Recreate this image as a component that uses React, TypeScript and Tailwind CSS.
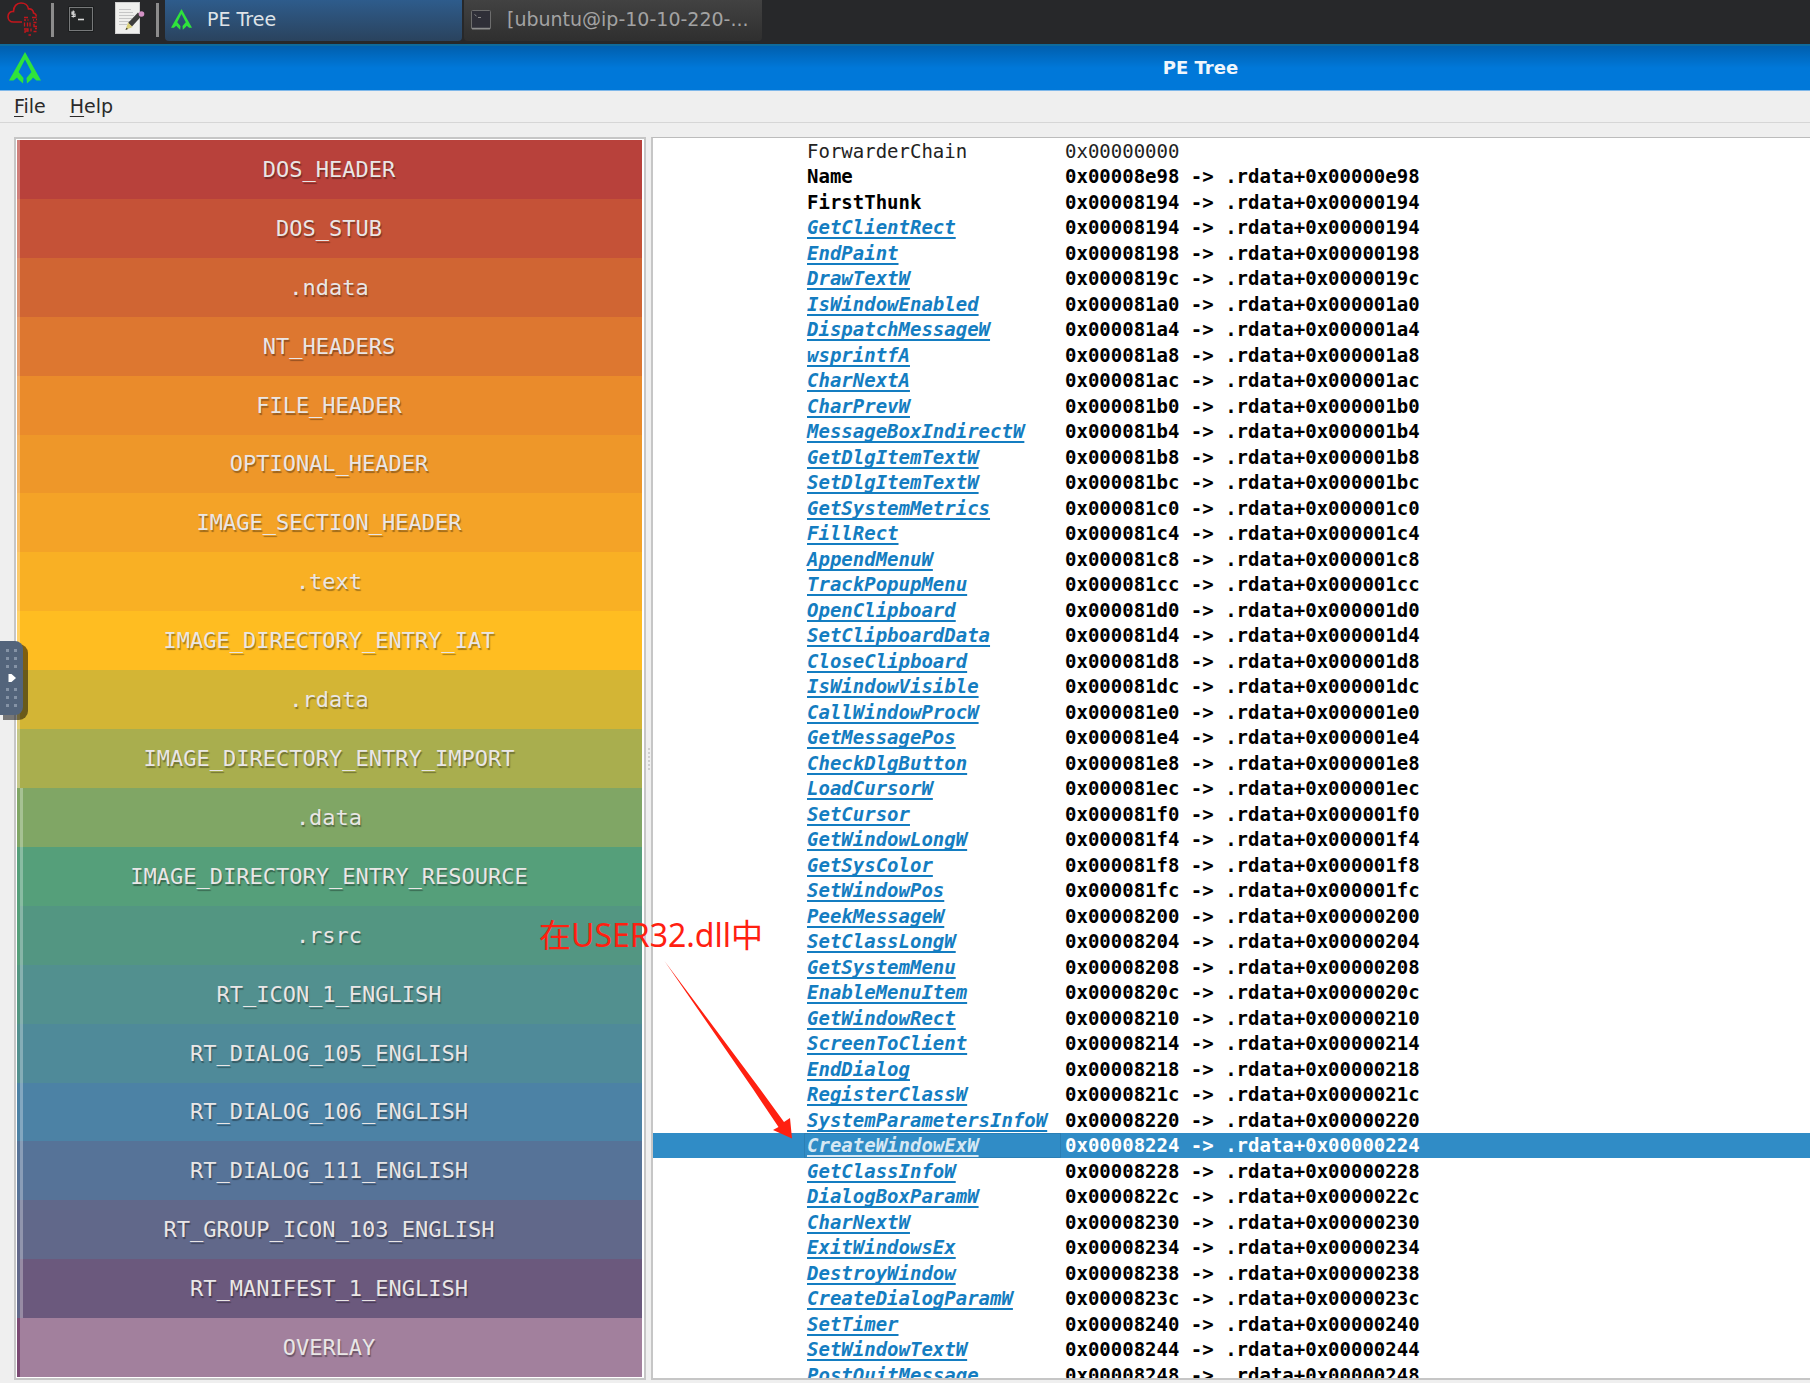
import React from "react";

const sections = [
  { label: "DOS_HEADER", color: "bg-[#b8413b]", edge: "border-[#d07f7b]" },
  { label: "DOS_STUB", color: "bg-[#c55237]", edge: "border-[#d98a77]" },
  { label: ".ndata", color: "bg-[#d06533]", edge: "border-[#df9674]" },
  { label: "NT_HEADERS", color: "bg-[#dd7730]", edge: "border-[#e8a273]" },
  { label: "FILE_HEADER", color: "bg-[#ea8b2b]", edge: "border-[#f0af70]" },
  { label: "OPTIONAL_HEADER", color: "bg-[#ee9729]", edge: "border-[#f3b76e]" },
  { label: "IMAGE_SECTION_HEADER", color: "bg-[#f4a327]", edge: "border-[#f7c06d]" },
  { label: ".text", color: "bg-[#f9b024]", edge: "border-[#fbc96b]" },
  { label: "IMAGE_DIRECTORY_ENTRY_IAT", color: "bg-[#ffbd21]", edge: "border-[#ffd269]" },
  { label: ".rdata", color: "bg-[#d3b535]", edge: "border-[#e0cc76]" },
  { label: "IMAGE_DIRECTORY_ENTRY_IMPORT", color: "bg-[#a9ae4e]", edge: "border-[#c4c787]" },
  { label: ".data", color: "bg-[#80a665]", edge: "border-[#80a665]", nested: true },
  { label: "IMAGE_DIRECTORY_ENTRY_RESOURCE", color: "bg-[#559f7a]", edge: "border-[#559f7a]", nested: true },
  { label: ".rsrc", color: "bg-[#539682]", edge: "border-[#559f7a]", nested: true },
  { label: "RT_ICON_1_ENGLISH", color: "bg-[#52908f]", edge: "border-[#539682]", nested: true },
  { label: "RT_DIALOG_105_ENGLISH", color: "bg-[#4f8a99]", edge: "border-[#52908f]", nested: true },
  { label: "RT_DIALOG_106_ENGLISH", color: "bg-[#4c82a5]", edge: "border-[#4c82a5]", nested: true },
  { label: "RT_DIALOG_111_ENGLISH", color: "bg-[#567398]", edge: "border-[#567398]", nested: true },
  { label: "RT_GROUP_ICON_103_ENGLISH", color: "bg-[#61688a]", edge: "border-[#61688a]", nested: true },
  { label: "RT_MANIFEST_1_ENGLISH", color: "bg-[#6b597d]", edge: "border-[#61688a]", nested: true },
  { label: "OVERLAY", color: "bg-[#a2809d]", edge: "border-[#7b4a73]" },
];

// imported functions in thunk order, 4 bytes apart
const imports = [
  "GetClientRect",
  "EndPaint",
  "DrawTextW",
  "IsWindowEnabled",
  "DispatchMessageW",
  "wsprintfA",
  "CharNextA",
  "CharPrevW",
  "MessageBoxIndirectW",
  "GetDlgItemTextW",
  "SetDlgItemTextW",
  "GetSystemMetrics",
  "FillRect",
  "AppendMenuW",
  "TrackPopupMenu",
  "OpenClipboard",
  "SetClipboardData",
  "CloseClipboard",
  "IsWindowVisible",
  "CallWindowProcW",
  "GetMessagePos",
  "CheckDlgButton",
  "LoadCursorW",
  "SetCursor",
  "GetWindowLongW",
  "GetSysColor",
  "SetWindowPos",
  "PeekMessageW",
  "SetClassLongW",
  "GetSystemMenu",
  "EnableMenuItem",
  "GetWindowRect",
  "ScreenToClient",
  "EndDialog",
  "RegisterClassW",
  "SystemParametersInfoW",
  "CreateWindowExW",
  "GetClassInfoW",
  "DialogBoxParamW",
  "CharNextW",
  "ExitWindowsEx",
  "DestroyWindow",
  "CreateDialogParamW",
  "SetTimer",
  "SetWindowTextW",
  "PostQuitMessage",
];

const hex = (n: number) => "0x" + n.toString(16).padStart(8, "0");
const address = (n: number) => `${hex(n)} -> .rdata+${hex(n - 0x8000)}`;

function TreeLogo({ className }: { className: string }) {
  return (
    <svg viewBox="0 0 32 32" className={className} fill="#2fe33c">
      <path d="M16 0 32 28.500 27.500 28.500 24 25.500 22.500 27.500 18 31.500 17.500 26 22.500 20 16 7.500 9.500 20 14.500 26 14 31.500 9.500 27.500 8 25.500 4.500 28.500 0 28.500Z" />
    </svg>
  );
}

function CloudLogo() {
  return (
    <svg viewBox="0 0 32 34" className="w-8 h-[34px]" fill="none" stroke="#c3161c" strokeWidth="1.600">
      <path d="M15 20H6.500C3 20 1 17.500 1 14.500 1 11.500 3.500 9 6.500 9.500 6.500 4.500 9.500 1 14 1c4 0 7 2.500 7.500 6 3-.5 5 1.500 5 4 2 .5 3 2 2.500 3.500" />
      <g strokeWidth="1.300">
        <path d="M17 15.500h4M17 18h2M20.500 18h1M25 15.500h4.500M26 18h1M29 17.500h1" />
        <path d="M17.500 20.500v4M20.500 20.500v4M23 20.500v4M26.500 20.500h3M27 22v2.500h3" />
        <path d="M17 27h4v2h-3v2M24 26.500v3M26.500 29.500h3M28 26.500h2M21.500 33h2.500" />
      </g>
    </svg>
  );
}

function TerminalIcon() {
  return (
    <svg viewBox="0 0 26 26" className="size-[26px]">
      <rect x="0.500" y="0.500" width="25" height="25" fill="#111213" />
      <rect x="1.500" y="1.500" width="23" height="23" fill="#232526" stroke="#77797a" />
      <path d="M7 6H4v2.200h3v2.300H3.500M5.300 4.500v7" fill="none" stroke="#d8d8d8" strokeWidth="1.200" />
      <path d="M10 13.500h6" stroke="#d8d8d8" strokeWidth="1.600" />
    </svg>
  );
}

function EditorIcon() {
  return (
    <svg viewBox="0 0 30 32" className="w-[30px] h-8">
      <rect x="0.500" y="0.500" width="24" height="31" fill="#efefed" stroke="#cfcfcf" />
      <path d="M4 7.500h12M4 10.500h14M4 13.500h15M4 16.500h13M4 19.500h11M4 22.500h8" stroke="#c6c6c6" />
      <path d="M13 21 23 10.500 26.500 14 17 24.500Z" fill="#3d3d3d" />
      <path d="M13 20.500 17.500 25 10.500 28Z" fill="#d9cf78" />
      <path d="M10.500 28l1-2.300 1.500 1.400Z" fill="#333" />
      <circle cx="26.500" cy="12" r="2.800" fill="#d291c4" />
    </svg>
  );
}

function TaskTerminalIcon() {
  return (
    <svg viewBox="0 0 20 20" className="size-5 shrink-0">
      <rect x="0.500" y="0.500" width="19" height="18.500" rx="1" fill="#2f2f38" stroke="#6d6d6d" />
      <path d="M1 18.500h18" stroke="#8d8d8d" strokeWidth="1.500" />
      <path d="M3.500 4.500 5.500 6M7 7.500h3" stroke="#8a8a8a" />
    </svg>
  );
}

function Taskbar() {
  return (
    <div className="flex h-11 shrink-0 items-start bg-[#27282a] text-[19px]">
      <button className="ml-[7px] mt-0.5" aria-label="Applications">
        <CloudLogo />
      </button>
      <div className="ml-3 mt-[3px] h-[34px] w-[3px] bg-[#8c8c8c]"></div>
      <button className="ml-[14px] mt-1.5" aria-label="Terminal">
        <TerminalIcon />
      </button>
      <button className="ml-[21px] mt-0.5" aria-label="Text editor">
        <EditorIcon />
      </button>
      <div className="ml-[11px] mt-[3px] h-[34px] w-[3px] bg-[#8c8c8c]"></div>
      <button className="ml-1.5 flex h-[41px] w-[297px] items-center rounded-b bg-linear-to-b from-[#2e5c8c] to-[#2a435e] pb-0.5 pl-1.5 text-[#dfe3e8]">
        <TreeLogo className="size-[21px] shrink-0" />
        <span className="pl-[15px]">PE Tree</span>
      </button>
      <button className="ml-0.5 flex h-[41px] w-[298px] items-center rounded-b bg-linear-to-b from-[#424242] to-[#2f2f2f] pb-0.5 pl-[7px] text-[#a3a3a3]">
        <TaskTerminalIcon />
        <span className="pl-4 whitespace-nowrap">[ubuntu@ip-10-10-220-...</span>
      </button>
    </div>
  );
}

function TitleBar() {
  return (
    <div className="flex h-[47px] shrink-0 items-center border-t-2 border-b border-t-[#0f6b9c] border-b-[#7fb8ea] bg-linear-to-b from-[#005fae] to-[#0078d9] to-50% pl-[9px]">
      <TreeLogo className="size-8" />
      <h1 className="flex-1 pl-[550px] text-center text-lg font-bold text-[#f0f6fc]">
        PE Tree
      </h1>
    </div>
  );
}

function SectionMap() {
  return (
    <div className="flex w-[632px] shrink-0 flex-col border-2 border-[#c6c6c6] bg-white p-px pr-0.5">
      {sections.map((s) => (
        <button
          key={s.label}
          className={`flex min-h-0 flex-1 items-center justify-center border-l-3 pr-1 font-[DejaVu_Sans_Mono,monospace] text-[22px] text-[#e9e6e6] text-shadow-[1px_2px_1px_rgb(0_0_0/0.35)] ${s.color} ${s.edge} ${s.nested ? "inset-shadow-[3px_0_0_rgb(255_255_255/0.3)]" : ""}`}
        >
          {s.label}
        </button>
      ))}
    </div>
  );
}

function ImportTable() {
  return (
    <div className="min-w-0 flex-1 overflow-hidden border-t border-b-2 border-l-2 border-t-[#bcbcbc] border-b-[#c6c6c6] border-l-[#c6c6c6] bg-white">
      <table className="w-full table-fixed border-collapse font-[DejaVu_Sans_Mono,monospace] text-[19px] leading-[25px] font-bold text-black">
        <colgroup>
          <col className="w-[151px]" />
          <col className="w-[257px]" />
          <col />
        </colgroup>
        <tbody>
          <tr className="h-[26px] font-normal text-[#222]">
            <td></td>
            <td className="p-0 pl-[3px]">ForwarderChain</td>
            <td className="p-0 pl-1">{hex(0)}</td>
          </tr>
          <tr className="h-[25px]">
            <td></td>
            <td className="p-0 pl-[3px]">Name</td>
            <td className="p-0 pl-1">{address(0x8e98)}</td>
          </tr>
          <tr className="h-[26px]">
            <td></td>
            <td className="p-0 pl-[3px]">FirstThunk</td>
            <td className="p-0 pl-1">{address(0x8194)}</td>
          </tr>
          {imports.map((name, i) => {
            const selected = name === "CreateWindowExW";
            return (
              <tr
                key={name}
                className={`odd:h-[26px] even:h-[25px] ${selected ? "bg-[#308cc6] text-white" : ""}`}
              >
                <td></td>
                <td
                  className={`p-0 pl-[3px] ${selected ? "inset-ring inset-ring-[#2a7fb5]" : ""}`}
                >
                  <a
                    href="#"
                    className={`italic underline decoration-2 underline-offset-3 [text-decoration-skip-ink:none] ${selected ? "text-[#d6e8f4]" : "text-[#147dc1]"}`}
                  >
                    {name}
                  </a>
                </td>
                <td className="p-0 pl-1">{address(0x8194 + i * 4)}</td>
              </tr>
            );
          })}
        </tbody>
      </table>
    </div>
  );
}

function Dots() {
  return (
    <div className="grid grid-cols-2 gap-x-[5px] gap-y-[5px]">
      {[0, 1, 2, 3, 4, 5].map((d) => (
        <span key={d} className="size-[3px] bg-[#8593a6]"></span>
      ))}
    </div>
  );
}

// pull-out handle of the remote desktop panel
function SideHandle() {
  return (
    <button
      aria-label="Open panel"
      className="absolute left-0 top-[641px] flex h-[74px] w-[23px] flex-col items-center justify-center gap-1.5 rounded-r-lg bg-[#53647b] shadow-[4px_4px_0_1px_rgb(0_0_0/0.5)]"
    >
      <Dots />
      <svg viewBox="0 0 8 8" className="size-2" fill="#fff">
        <path d="M0.500 0h3L8 4 3.500 8h-3Z" />
      </svg>
      <Dots />
    </button>
  );
}

function Annotation() {
  return (
    <div className="pointer-events-none absolute left-[539px] top-[911px] text-[#ff2010]">
      <p className="font-['Noto_Sans','Noto_Sans_CJK_SC',sans-serif] text-[32px] leading-[48px] whitespace-nowrap">
        在USER32.dll中
      </p>
      <svg viewBox="0 0 130 180" className="ml-[125px] h-[180px] w-[130px]" fill="currentColor">
        <path d="M0.500 2 96 130 120 163 126 159 128 179.500 109 171 114.500 168 89 130Z" />
      </svg>
    </div>
  );
}

export default function App() {
  return (
    <div className="relative flex h-screen flex-col overflow-hidden bg-[#efefef] font-[DejaVu_Sans,sans-serif]">
      <Taskbar />
      <TitleBar />
      <nav className="flex h-8 shrink-0 items-center gap-6 border-b border-[#d6d6d6] pl-3.5 text-[19px] text-[#2a2a2a]">
        <button>
          <span className="underline underline-offset-3">F</span>ile
        </button>
        <button>
          <span className="underline underline-offset-3">H</span>elp
        </button>
      </nav>
      <main className="flex min-h-0 flex-1 pt-[14px] pb-[3px] pl-3.5">
        <SectionMap />
        <div className="flex w-[5px] shrink-0 flex-col items-center justify-center gap-0.5">
          {[0, 1, 2, 3, 4, 5].map((d) => (
            <span key={d} className="size-0.5 bg-[#cfcfcf]"></span>
          ))}
        </div>
        <ImportTable />
      </main>
      <SideHandle />
      <Annotation />
    </div>
  );
}
